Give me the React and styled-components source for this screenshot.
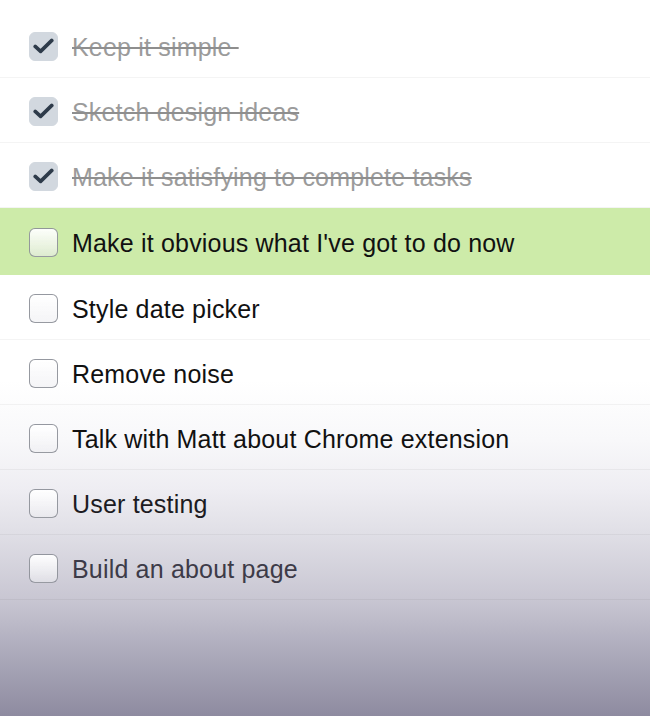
import styled, { createGlobalStyle } from 'styled-components';

const tasks = [
  { id: 1, title: 'Keep it simple\u00a0', done: true },
  { id: 2, title: 'Sketch design ideas', done: true },
  { id: 3, title: 'Make it satisfying to complete tasks', done: true },
  { id: 4, title: "Make it obvious what I've got to do now", current: true },
  { id: 5, title: 'Style date picker' },
  { id: 6, title: 'Remove noise' },
  { id: 7, title: 'Talk with Matt about Chrome extension' },
  { id: 8, title: 'User testing', ink: '#1c1b22' },
  { id: 9, title: 'Build an about page', ink: '#3d3b48' },
];

const GlobalStyle = createGlobalStyle`
  html, body {
    margin: 0;
    height: 100%;
  }
  body {
    font-family: 'Liberation Sans', Arial, Helvetica, sans-serif;
    background: linear-gradient(
      to bottom,
      #ffffff 0,
      #ffffff 380px,
      #f8f8fa 440px,
      #eeedf2 490px,
      #e1e0e7 530px,
      #c8c6d2 600px,
      #aba9ba 655px,
      #8e8ba0 716px
    );
    background-repeat: no-repeat;
    min-height: 716px;
  }
`;

const CheckIcon = () => (
  <svg width="21" height="16" viewBox="0 0 21 16" fill="none">
    <path
      d="M2.2 8.4 L7.6 13.4 L18.8 2.4"
      stroke="#2e3b4a"
      strokeWidth="3.6"
      strokeLinecap="round"
      strokeLinejoin="round"
    />
  </svg>
);

const App = () => (
  <>
    <GlobalStyle />
    <List>
      {tasks.map((t) => (
        <Row key={t.id} $current={t.current}>
          <Box $done={t.done}>{t.done && <CheckIcon />}</Box>
          <Label $done={t.done} $ink={t.ink}>
            {t.title}
          </Label>
        </Row>
      ))}
    </List>
  </>
);

const List = styled.ul`
  list-style: none;
  margin: 0;
  padding: 13px 0 0;
`;

const Row = styled.li`
  display: flex;
  align-items: center;
  gap: 14px;
  padding: 0 29px;
  border-bottom: 1px solid
    ${(p) => (p.$current ? '#cdeba9' : 'rgba(0, 0, 0, 0.045)')};
  background: ${(p) => (p.$current ? '#cdeba9' : 'transparent')};
  height: ${(p) => (p.$current ? '66px' : '64px')};
`;

const Box = styled.span`
  flex: none;
  box-sizing: border-box;
  width: 29px;
  height: 29px;
  margin-top: 2px;
  border-radius: 6px;
  display: flex;
  align-items: center;
  justify-content: center;
  background: ${(p) =>
    p.$done
      ? '#d2d8df'
      : 'linear-gradient(to bottom, rgba(255,255,255,0.95), rgba(236,236,240,0.55))'};
  border: ${(p) => (p.$done ? '1px solid #d2d8df' : '1.5px solid rgba(125, 129, 138, 0.8)')};
`;

const Label = styled.span`
  font-size: 25px;
  letter-spacing: 0.18px;
  line-height: 1;
  white-space: pre;
  margin-top: 4px;
  color: ${(p) => (p.$done ? '#9b9b9b' : p.$ink || '#111')};
  text-decoration: ${(p) => (p.$done ? 'line-through' : 'none')};
  text-decoration-thickness: 1.5px;
  text-decoration-color: #8e8e8e;
`;

export default App;
